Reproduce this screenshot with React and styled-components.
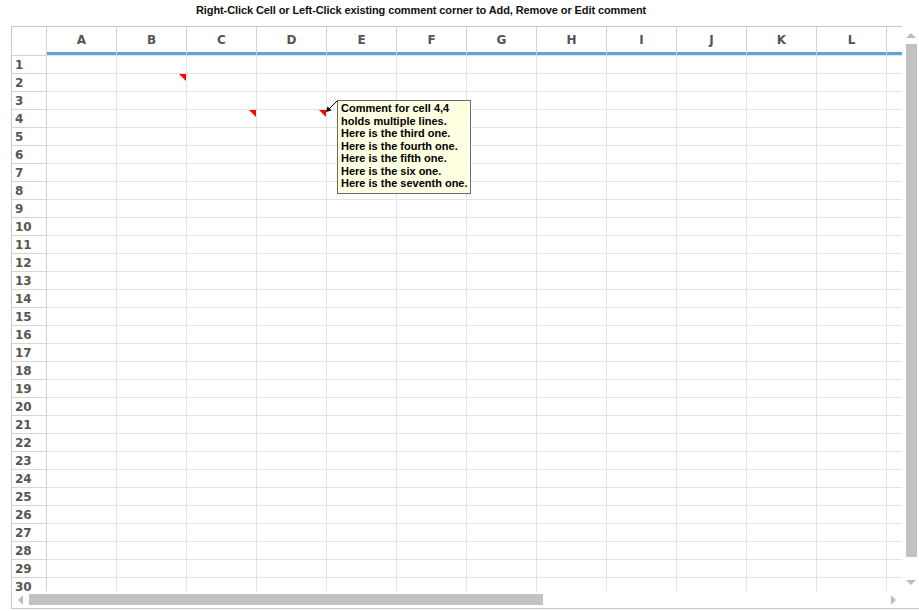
import React from "react";
import styled, { createGlobalStyle } from "styled-components";

const GlobalStyle = createGlobalStyle`
  html, body {
    margin: 0;
    padding: 0;
    background: #fff;
    overflow: hidden;
  }
`;

const COLS = ["A", "B", "C", "D", "E", "F", "G", "H", "I", "J", "K", "L", "M"];
const ROWS = Array.from({ length: 30 }, (_, i) => i + 1);
const COMMENTS = { "2-1": true, "4-2": true, "4-3": true };

const Page = styled.div`
  width: 919px;
  height: 611px;
`;

const Title = styled.div`
  height: 26px;
  padding-left: 196px;
  box-sizing: border-box;
  font-family: "Liberation Sans", Arial, sans-serif;
  font-weight: bold;
  font-size: 11px;
  letter-spacing: -0.1px;
  line-height: 20px;
  color: #111;
`;

const Frame = styled.div`
  margin-left: 11px;
  width: 908px;
  height: 583px;
  box-sizing: border-box;
  border-left: 1px solid #c9c9c9;
  border-bottom: 1px solid #c9c9c9;
  display: grid;
  grid-template-columns: 890px 17px;
  grid-template-rows: 565px 17px;
`;

const Viewport = styled.div`
  border-top: 1px solid #c9c9c9;
  overflow: hidden;
  position: relative;
`;

const HeaderRow = styled.div`
  display: flex;
  height: 29px;
`;

const Corner = styled.div`
  flex: 0 0 35px;
  box-sizing: border-box;
  border-right: 1px solid #d2d2d2;
  border-bottom: 1px solid #d2d2d2;
`;

const ColHead = styled.div`
  flex: 0 0 70px;
  box-sizing: border-box;
  height: 29px;
  padding-bottom: 4px;
  border-right: 1px solid #d2d2d2;
  background: linear-gradient(to top, #e6e6e6 0 1px, #5ca5da 1px 4px, #fff 4px);
  display: flex;
  align-items: center;
  justify-content: center;
  font-family: "DejaVu Sans", Verdana, sans-serif;
  font-weight: bold;
  font-size: 12px;
  color: #555;
`;

const Row = styled.div`
  display: flex;
  height: 18px;
`;

const RowHead = styled.div`
  flex: 0 0 35px;
  box-sizing: border-box;
  border-right: 1px solid #d2d2d2;
  border-bottom: 1px solid #d6d6d6;
  padding-left: 3px;
  font-family: "DejaVu Sans", Verdana, sans-serif;
  font-weight: bold;
  font-size: 12px;
  line-height: 18px;
  color: #5a5550;
`;

const Cell = styled.div`
  flex: 0 0 70px;
  box-sizing: border-box;
  border-right: 1px solid #e4e4e4;
  border-bottom: 1px solid #e4e4e4;
  position: relative;
`;

const Marker = styled.span`
  position: absolute;
  top: 0;
  right: 0;
  width: 0;
  height: 0;
  border-top: 7px solid #ff0000;
  border-left: 7px solid transparent;
`;

const Comment = styled.div`
  position: absolute;
  left: 325px;
  top: 73px;
  width: 134px;
  box-sizing: border-box;
  padding: 1px 0 3px 3px;
  background: #ffffe1;
  border: 1px solid #6b6b6b;
  font-family: "Liberation Sans", Arial, sans-serif;
  font-weight: bold;
  font-size: 11px;
  line-height: 12.5px;
  color: #000;
`;

const Connector = styled.svg`
  position: absolute;
  left: 313px;
  top: 73px;
`;

const VScroll = styled.div`
  display: flex;
  flex-direction: column;
  align-items: center;
  padding: 7px 0 6px;
  box-sizing: border-box;
`;

const HScroll = styled.div`
  display: flex;
  align-items: center;
  padding: 0 6px;
  box-sizing: border-box;
`;

const Arrow = styled.span`
  width: 0;
  height: 0;
  flex: 0 0 auto;
  ${({ $dir }) =>
    $dir === "up"
      ? "border-left: 5px solid transparent; border-right: 5px solid transparent; border-bottom: 5px solid #bdbdbd;"
      : $dir === "down"
      ? "border-left: 5px solid transparent; border-right: 5px solid transparent; border-top: 5px solid #bdbdbd; margin-top: auto;"
      : $dir === "left"
      ? "border-top: 5px solid transparent; border-bottom: 5px solid transparent; border-right: 5px solid #bdbdbd;"
      : "border-top: 5px solid transparent; border-bottom: 5px solid transparent; border-left: 5px solid #bdbdbd; margin-left: auto;"}
`;

const VThumb = styled.div`
  width: 11px;
  height: 513px;
  margin-top: 6px;
  margin-left: 1px;
  background: #c2c2c2;
`;

const HThumb = styled.div`
  height: 11px;
  width: 514px;
  margin-left: 6px;
  background: #c2c2c2;
`;

const LINES = [
  "Comment for cell 4,4",
  "holds multiple lines.",
  "Here is the third one.",
  "Here is the fourth one.",
  "Here is the fifth one.",
  "Here is the six one.",
  "Here is the seventh one.",
];

export default function App() {
  return (
    <Page>
      <GlobalStyle />
      <Title>
        Right-Click Cell or Left-Click existing comment corner to Add, Remove or Edit comment
      </Title>
      <Frame>
        <Viewport>
          <HeaderRow>
            <Corner />
            {COLS.map((c) => (
              <ColHead key={c}>{c}</ColHead>
            ))}
          </HeaderRow>
          {ROWS.map((r) => (
            <Row key={r}>
              <RowHead>{r}</RowHead>
              {COLS.map((c, ci) => (
                <Cell key={c}>{COMMENTS[`${r}-${ci}`] && <Marker />}</Cell>
              ))}
            </Row>
          ))}
          <Connector width="14" height="14" viewBox="0 0 14 14">
            <line x1="12" y1="1" x2="2" y2="11" stroke="#000" strokeWidth="1" />
            <path d="M1 12 L2.5 6.5 L6.5 10.5 Z" fill="#000" />
          </Connector>
          <Comment>
            {LINES.map((l) => (
              <div key={l}>{l}</div>
            ))}
          </Comment>
        </Viewport>
        <VScroll>
          <Arrow $dir="up" />
          <VThumb />
          <Arrow $dir="down" />
        </VScroll>
        <HScroll>
          <Arrow $dir="left" />
          <HThumb />
          <Arrow $dir="right" />
        </HScroll>
      </Frame>
    </Page>
  );
}
